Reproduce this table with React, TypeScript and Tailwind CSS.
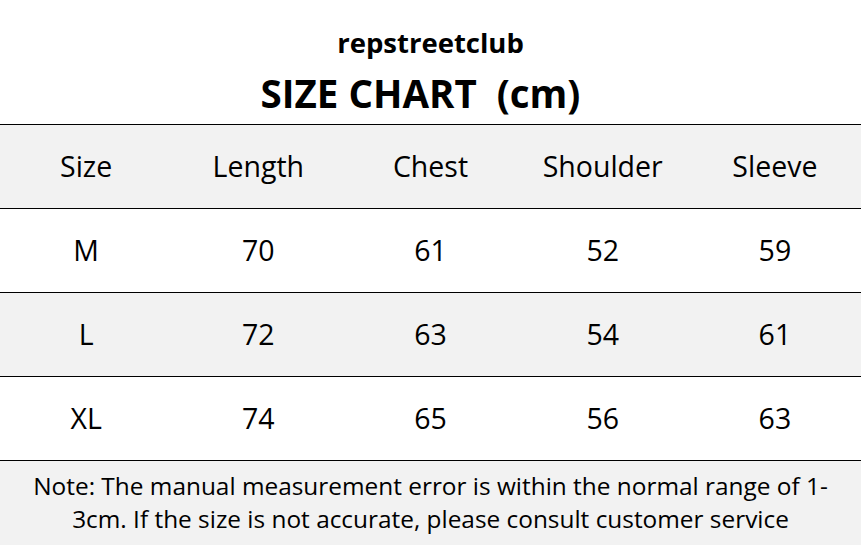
import React from "react";

const columns = ["Size", "Length", "Chest", "Shoulder", "Sleeve"];

const rows = [
  ["M", "70", "61", "52", "59"],
  ["L", "72", "63", "54", "61"],
  ["XL", "74", "65", "56", "63"],
];

const App = () => {
  return (
    <div
      className="w-[861px] h-[545px] bg-white text-black overflow-hidden"
      style={{ fontFamily: '"Open Sans", "Noto Sans", sans-serif' }}
    >
      <div className="h-[124px] flex flex-col items-center">
        <h2 className="mt-[25px] text-[27.5px] leading-[36px] font-bold">repstreetclub</h2>
        <h1 className="mt-[8px] pr-[20px] text-[38.5px] leading-[48px] font-bold whitespace-pre">
          SIZE CHART  (cm)
        </h1>
      </div>
      <div className="border-t border-black">
        <div className="grid grid-cols-5 h-[84px] bg-[#f2f2f2] border-b border-black">
          {columns.map((c) => (
            <div key={c} className="flex items-center justify-center text-[28.5px]">
              {c}
            </div>
          ))}
        </div>
        {rows.map((r, i) => (
          <div
            key={r[0]}
            className={`grid grid-cols-5 h-[84px] border-b border-black ${
              i % 2 === 1 ? "bg-[#f2f2f2]" : "bg-white"
            }`}
          >
            {r.map((v, j) => (
              <div key={j} className="flex items-center justify-center text-[28.5px]">
                {v}
              </div>
            ))}
          </div>
        ))}
        <div className="h-[85px] bg-[#f2f2f2] flex items-start justify-center pt-[8px]">
          <p className="w-[820px] text-center text-[24.4px] leading-[33px]">
            Note: The manual measurement error is within the normal range of 1-
            3cm. If the size is not accurate, please consult customer service
          </p>
        </div>
      </div>
    </div>
  );
};

export default App;
